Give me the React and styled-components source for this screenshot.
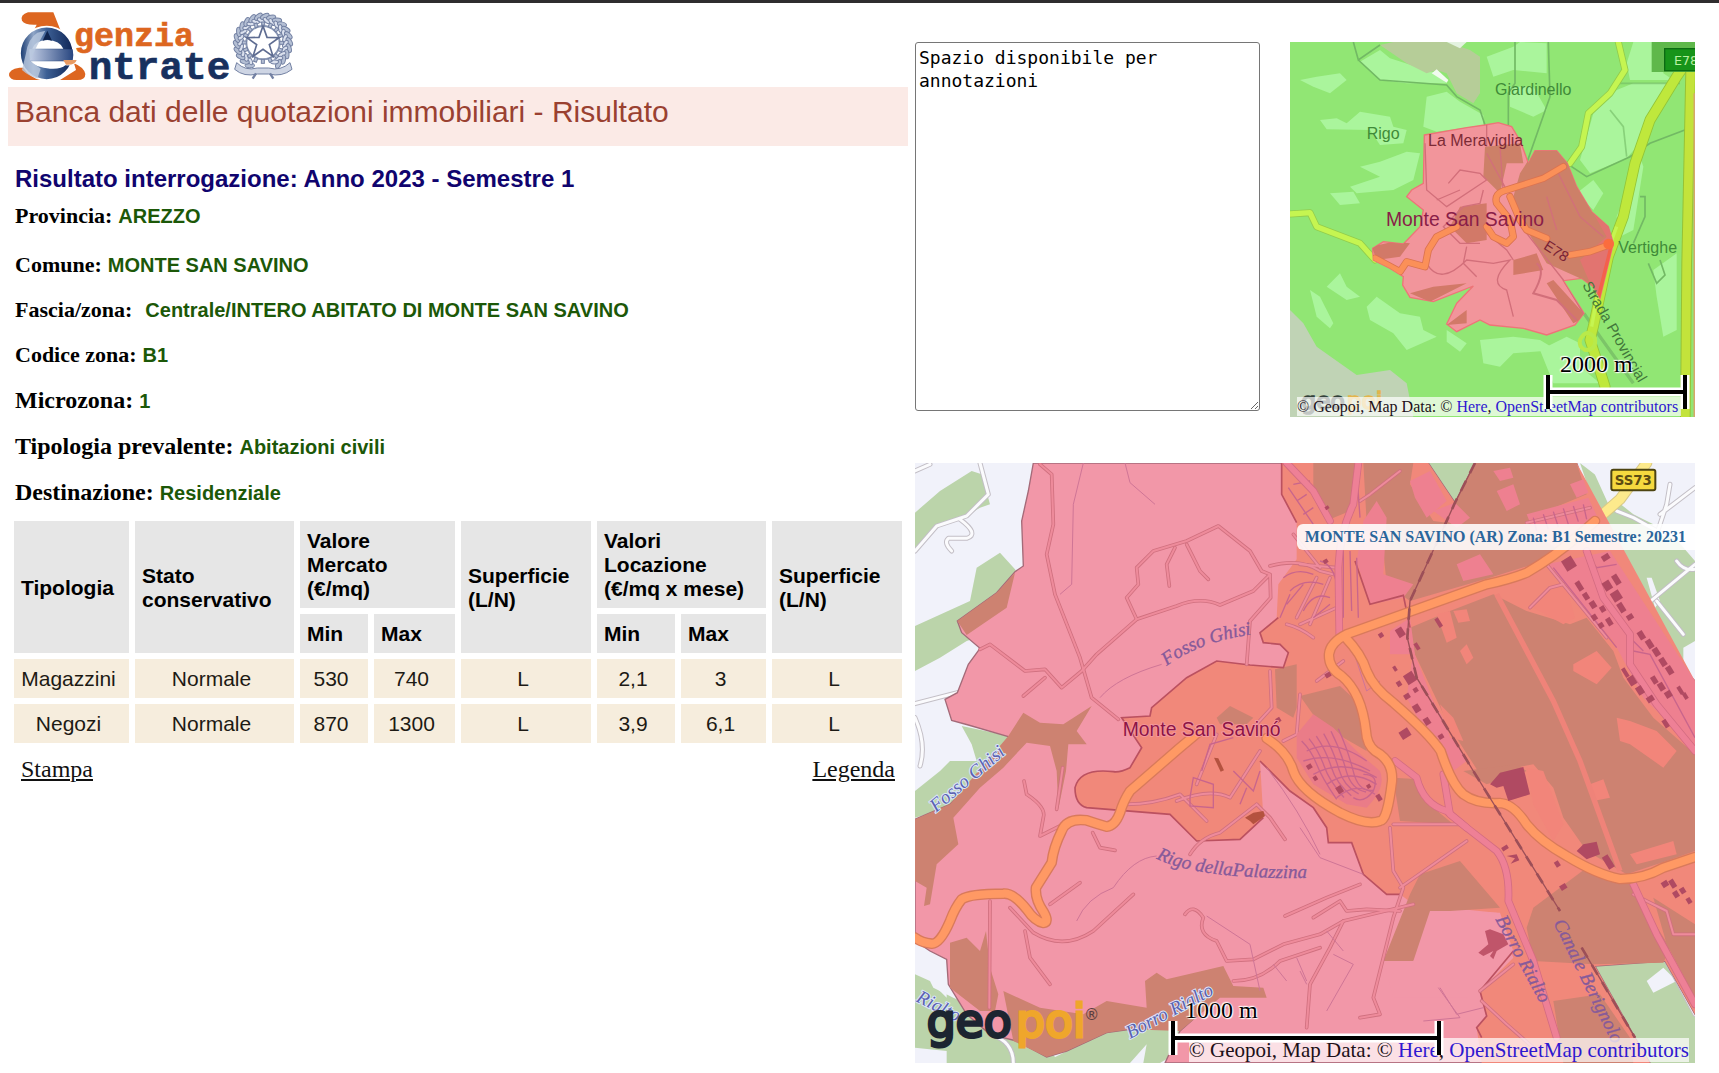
import React, { useState } from 'react';
import styled, { createGlobalStyle } from 'styled-components';

const GlobalStyle = createGlobalStyle`
    body {
        margin: 0;
        background: #fff;
        color: #000;
        font-family: "Liberation Serif", "Times New Roman", serif;
    }
    * {
        box-sizing: border-box;
    }
`

const Page = styled.div`
    display: grid;
    grid-template-columns: 15fr 13fr;
    gap: 7px;
    align-items: start;
    border-top: 3px solid #2f2d2e;
    padding: 7px 24px 8px 8px;
`

const Column = styled.main`
    min-width: 0;
`

const Side = styled.aside`
    min-width: 0;
    padding-top: 32px;
    display: grid;
    gap: 46px;
`

const SideTop = styled.div`
    display: grid;
    grid-template-columns: 345fr 405fr;
    gap: 30px;
    align-items: start;
`

const LogoSvg = styled.svg`
    display: block;
    width: 288px;
    height: 74px;
    margin-bottom: 3px;
`

const Banner = styled.h1`
    margin: 0;
    padding: 8px 7px 17px;
    background: #fbeae6;
    color: #9a4131;
    font: 400 30px/34px "Liberation Sans", Arial, sans-serif;
`

const Heading = styled.h2`
    margin: 19px 7px 0;
    color: #10046e;
    font: 700 24px/28px "Liberation Sans", Arial, sans-serif;
`

const Details = styled.dl`
    margin: 0 7px;
`

const Detail = styled.div`
    display: flex;
    align-items: baseline;
    gap: ${p => (p.$wide ? 13 : 6)}px;
    font-size: ${p => (p.$large ? 24 : 22)}px;
    line-height: ${p => (p.$large ? 46 : 45)}px;
    font-weight: 700;
    &:first-child {
        margin-bottom: 4px;
    }
`

const Term = styled.dt`
    color: #000;
`

const Value = styled.dd`
    margin: 0;
    color: #1c5808;
    font: 700 20px/24px "Liberation Sans", Arial, sans-serif;
`

const Table = styled.table`
    width: 100%;
    table-layout: fixed;
    border-collapse: separate;
    border-spacing: 6px;
    font: 400 21px/24px "Liberation Sans", Arial, sans-serif;
`

const Th = styled.th`
    padding: 8px 7px 7px;
    background: #e6e6e6;
    text-align: left;
    font-weight: 700;
`

const Td = styled.td`
    padding: 8px 6px 7px 0;
    background: #f6eddd;
    color: #1d1a14;
    text-align: center;
`

const Links = styled.nav`
    display: flex;
    justify-content: space-between;
    padding: 6px 13px;
    font-size: 24px;
    line-height: 28px;
`

const Link = styled.a`
    color: #111;
`

const Notes = styled.textarea`
    display: block;
    width: 100%;
    height: 369px;
    padding: 3px;
    border: 1px solid #767676;
    border-radius: 3px;
    background: #fff;
    color: #000;
    font: 400 18px/23px "DejaVu Sans Mono", monospace;
    resize: both;
`

const MapBox = styled.section`
    position: relative;
    overflow: hidden;
    aspect-ratio: ${p => p.$ratio};
`

const MapSvg = styled.svg`
    display: block;
    width: 100%;
    height: 100%;
`

const Caption = styled.div`
    position: absolute;
    top: 61px;
    right: 0;
    padding: 0 9px 0 8px;
    border-radius: 6px 0 0 6px;
    background: rgba(255, 255, 255, 0.88);
    color: #2a659b;
    font-size: 16px;
    font-weight: 700;
    line-height: 26px;
`

const Credits = styled.div`
    position: absolute;
    right: ${p => (p.$small ? 14 : 6)}px;
    bottom: 1px;
    left: ${p => (p.$small ? '7px' : 'auto')};
    overflow: hidden;
    white-space: nowrap;
    background: rgba(255, 255, 255, 0.7);
    color: #201018;
    font-size: ${p => (p.$small ? 16 : 21)}px;
    line-height: ${p => (p.$small ? 19 : 24)}px;
    a {
        color: #2f18d0;
        text-decoration: none;
    }
`

const Scale = styled.div`
    position: absolute;
    right: ${p => p.$right}px;
    bottom: 6px;
    width: ${p => p.$width}px;
    font-size: 24px;
    line-height: 18px;
    color: #000;
    text-shadow: 0 0 2px #fff, 0 0 2px #fff, 1px 1px 1px #fff, -1px -1px 1px #fff;
`

const ScaleLabel = styled.div`
    padding-left: 17px;
`

const ScaleSvg = styled.svg`
    display: block;
    width: 100%;
    height: 38px;
`

function ScaleBar({ label, width, right }) {
    const d = `M5 2V36M${width - 5} 2V36M5 19H${width - 5}`;
    return (
        <Scale $width={width} $right={right}>
            <ScaleSvgWithLabel label={label} d={d} />
        </Scale>
    )
}

function ScaleSvgWithLabel({ label, d }) {
    return (
        <>
            <ScaleLabel>{label}</ScaleLabel>
            <ScaleSvg>
                <path d={d} stroke="#fff" strokeWidth="9" fill="none" />
                <path d={d} stroke="#000" strokeWidth="4" fill="none" />
            </ScaleSvg>
        </>
    )
}

function MapCredits({ small }) {
    return (
        <Credits $small={small}>
            © Geopoi, Map Data: © <a href="#here">Here</a>, <a href="#osm">OpenStreetMap contributors</a>
        </Credits>
    )
}

const leaves = Array.from({ length: 22 }, (_, i) => -240 + i * 14);
const teeth = Array.from({ length: 16 }, (_, i) => i * 22.5);

function Logo() {
    return (
        <LogoSvg viewBox="24 30 864 222" role="img" aria-label="Agenzia Entrate">
            <defs>
                <linearGradient id="ring" x1="0" y1="0" x2="1" y2="0">
                    <stop offset="0" stopColor="#16386f" />
                    <stop offset=".25" stopColor="#8fa5c6" />
                    <stop offset=".5" stopColor="#3c5f94" />
                    <stop offset="1" stopColor="#0e2455" />
                </linearGradient>
                <linearGradient id="bar" x1="0" y1="0" x2="1" y2="0">
                    <stop offset="0" stopColor="#c4cfe6" />
                    <stop offset="1" stopColor="#27457f" />
                </linearGradient>
            </defs>
            <path d="M84 37H160L182 92Q140 74 104 86L110 74Q74 76 66 62Q60 44 84 37Z" fill="#dd6620" />
            <path d="M58 203Q26 208 27 226Q30 240 50 240H124L80 203ZM222 190Q252 202 256 222Q256 240 232 240H180L228 210Z" fill="#dd6620" />
            <circle cx="140" cy="160" r="80" fill="url(#ring)" stroke="#fff" strokeWidth="5" />
            <path d="M97 146Q104 122 142 120Q180 122 190 146Z" fill="#fff" />
            <path d="M88 148H218Q222 166 218 182H90Z" fill="url(#bar)" />
            <path d="M92 184H230Q226 198 196 196Q184 208 150 206Q108 204 92 184Z" fill="#fff" />
            <path d="M112 98Q84 116 78 160L66 210Q86 228 112 236L122 206L90 182L112 136L136 92Z" fill="#b9c8df" opacity=".8" />
            <path d="M142 92L156 122Q142 116 128 122Z" fill="#10254f" />
            <path d="M190 180H230Q226 196 198 194Z" fill="#e89a62" />
            <g fontFamily="Liberation Mono" fontWeight="700" strokeWidth="2">
                <text x="222" y="137" fontSize="100" fill="#dd6620" stroke="#dd6620">genzia</text>
                <text x="266" y="237" fontSize="118" fill="#17305e" stroke="#17305e">ntrate</text>
            </g>
            <g stroke="#7381a3" fill="#b4bfd4" strokeWidth="3">
                {leaves.map(a => (
                    <g key={a} transform={`rotate(${a} 789 128)`}>
                        <ellipse cx="868" cy="128" rx="7" ry="14" transform="rotate(-30 868 128)" />
                        <ellipse cx="856" cy="134" rx="6" ry="12" transform="rotate(35 856 134)" fill="#dbe1ee" />
                    </g>
                ))}
                <circle cx="789" cy="128" r="50" fill="none" stroke="#8c99b6" strokeWidth="6" />
                {teeth.map(a => (
                    <rect key={a} x="785" y="66" width="9" height="12" transform={`rotate(${a} 789 128)`} />
                ))}
                <path d="M789 78L801 112L837 113L808 134L819 169L789 148L759 169L770 134L741 113L777 112Z" fill="#fff" stroke="#5e6c91" strokeWidth="5" />
                <path d="M710 188Q736 214 772 204L806 204Q842 214 870 188L876 208Q846 232 806 222H772Q732 232 704 208Z" fill="#ced5e4" />
                <path d="M768 220L758 236M810 220L820 236" fill="none" strokeWidth="7" />
            </g>
        </LogoSvg>
    )
}

// Street geometry: each road is drawn twice, a wide casing and a narrower fill.
function Roads({ paths, casing, fill, width, edge = 8 }) {
    return (
        <g fill="none" strokeLinejoin="round" strokeLinecap="round">
            {paths.map(d => <path key={d} d={d} stroke={casing} strokeWidth={width + edge} />)}
            {paths.map(d => <path key={d} d={d} stroke={fill} strokeWidth={width} />)}
        </g>
    )
}

const mainRoads = [
    'M2085 210L2040 250Q1960 320 1880 365Q1830 385 1760 400L1340 550Q1290 575 1287 610Q1285 650 1325 675Q1385 725 1398 840Q1400 880 1425 900Q1480 930 1476 990Q1462 1110 1440 1110Q1400 1125 1320 1085Q1200 1020 1180 960Q1165 905 1100 862',
    'M900 840L840 890L690 1020Q670 1050 660 1085Q645 1125 620 1127Q590 1118 560 1108Q500 1100 485 1140Q460 1190 455 1235L408 1310Q404 1345 432 1385Q448 1414 430 1416Q405 1412 380 1375Q340 1325 310 1328Q210 1328 185 1345Q165 1370 150 1410Q120 1480 95 1478Q65 1475 45 1460',
    'M1335 558Q1385 610 1400 660Q1420 710 1480 755Q1590 850 1622 900Q1655 1000 1690 1030Q1730 1060 1800 1056Q1840 1058 1880 1120Q1920 1170 2000 1215Q2090 1270 2160 1284Q2230 1284 2290 1250L2385 1218',
]

const pinkRoads = [
    'M1160 36L1240 120L1290 210',
    'M1375 36L1360 160Q1320 240 1315 350L1318 550',
    'M1485 930L1550 980Q1570 1060 1640 1080L1700 1130L1790 1200Q1830 1250 1825 1350L1900 1530L1970 1760',
    'M1630 970L1650 1090L1700 1130',
    'M2060 300L2110 440L2190 550L2190 640L2270 760L2385 900',
    'M2200 1300L2270 1450L2385 1660',
]

const lanes = [
    'M420 40L455 70L460 220L440 310L465 430L540 620L575 740L655 805',
    'M1110 370L1085 360L1050 300L955 225L860 270L760 300L710 350L715 400L680 440L710 505L830 465Q900 435 960 462L1060 420L1110 370L1112 440L1050 510L1040 640',
    'M825 290L800 340L808 405',
    'M860 280L900 360L925 385',
    'M710 505L590 610L545 660L485 710L435 655L375 660L270 580L240 595',
    'M435 680L370 735',
    'M1110 345Q1200 320 1260 360L1320 375',
    'M1160 520Q1200 530 1240 560',
    'M372 990L380 1030Q440 1070 430 1100L420 1155L480 1125',
    'M488 950L470 1075',
    'M578 1145L600 1190L645 1198',
    'M270 1350L268 1670',
    'M330 1370L400 1445Q490 1500 580 1440L700 1330',
    'M375 1440L390 1520L450 1600',
    'M450 1360L540 1295',
    'M870 1210Q900 1160 960 1145L1070 1060',
    'M1070 1060L1110 1100L1155 1165',
    'M855 1390Q880 1355 910 1400Q890 1450 950 1470L980 1530L1060 1525L1150 1480L1260 1450L1330 1410L1540 1360',
    'M1155 1395L1280 1340L1380 1300',
    'M1240 1400L1320 1350L1340 1380L1400 1375L1500 1380',
    'M1000 1590Q1080 1590 1140 1530L1260 1490',
    'M1380 1700L1440 1690L1420 1640L1480 1400L1510 1310L1480 1260L1470 1130',
    'M1500 1310L1700 1170',
    'M1220 1730L1230 1600L1290 1490L1330 1410',
    'M1110 660L1115 770L1060 830',
    'M1250 690L1330 630',
    'M1200 730L1190 850L1150 870',
    'M830 1050Q930 1010 990 1040L1080 900',
    'M890 1000L950 850',
    'M680 1060Q760 1060 840 1030L920 1110',
    'M1480 1120H1680',
    'M1840 1540L1740 1620',
    'M1745 1650L1820 1720L1900 1790',
    'M1940 340L2120 560',
    'M1890 470L1950 410L1990 400',
    'M2200 1330L2300 1380L2320 1450L2385 1450',
    'M1880 215L2070 170',
    'M1380 150L1410 130L1500 60',
    'M1180 250L1260 350M1250 380L1190 500M1290 380L1230 520M1200 340L1310 350M1200 520L1310 470',
]

const streams = [
    'M550 36L520 160L515 400L480 430',
    'M675 36L690 95L765 160',
    'M600 740Q650 680 785 640',
    'M530 1410Q560 1340 640 1310Q700 1220 770 1215',
    'M1100 950Q1200 1080 1260 1210',
    'M1200 1130L1260 1220L1390 1270',
    'M920 1395L1050 1480L1080 1620',
    'M1120 1540L1160 1590M1190 1520L1220 1590M1280 1440L1330 1500',
    'M1615 1610L1680 1700L1570 1710M1620 1610L1670 1690L1750 1670',
    'M1200 1560L1220 1600M1300 1510L1360 1540L1280 1680',
    'M1360 600L1400 720L1440 690',
]

const browns = [
    '1240,36 1368,36 1350,180 1290,205 1240,110',
    '1390,36 1540,36 1530,100 1600,210 1640,215 1530,450 1460,400 1450,300 1400,215',
    '1725,36 2030,36 2060,130 1890,200 1890,240 1980,300 1900,340 1770,380 1530,450 1665,155',
    '1530,530 1650,480 1780,430 1880,480 2010,520 2060,500 2140,600 2170,680 2260,800 2385,910 2385,1200 2300,1230 2180,1270 2060,1200 1990,1100 1960,1010 1900,940 1740,970 1650,830 1540,600',
    '172,510 290,425 345,365 320,470 200,552',
    '325,855 370,785 420,815 490,820 575,765 530,840 560,880 505,880 498,960 475,1075 470,960 450,885 380,875 310,950 240,1010 160,1100 175,1180 110,1240 90,1360 72,1365 80,1310 45,1290 45,1105 150,1060',
    '150,1475 200,1460 240,1500 258,1440 270,1550 295,1630 285,1680 240,1680 150,1610',
    '310,1620 420,1670 550,1690 620,1650 740,1670 735,1590 770,1565 800,1585 970,1545 1000,1605 1090,1610 1100,1640 960,1640 840,1740 690,1735 620,1745 500,1800 440,1818 340,1770',
    '1125,655 1190,640 1190,770 1180,800 1130,770',
    '1200,735 1320,705 1380,760 1400,900 1260,820',
    '950,800 990,765 1060,800 1040,820 960,820',
    '1480,980 1560,985 1600,1070 1660,1120 1500,1110',
    '1530,1330 1560,1270 1680,1230 1800,1370 1650,1380 1600,1470 1540,1530 1450,1530 1490,1430',
    '1900,1370 2060,1250 2190,1300 2310,1490 2290,1535 2080,1540 1900,1530 1880,1430',
    '1960,1650 2100,1630 2190,1760 2200,1836 1990,1836',
    '2260,1340 2385,1420 2385,1640 2300,1480',
    '1690,960 1850,940 1880,960 1760,1000',
]

const pinkPatches = [
    '1530,90 1590,60 1640,150 1580,200 1545,140',
    '1390,210 1430,150 1460,200 1450,370 1540,400 1510,440 1410,460 1370,330',
    '1600,180 1665,155 1710,200 1670,230',
    '1780,60 1830,50 1840,80 1800,90',
    '1790,120 1840,100 1860,160 1820,180',
    '1670,340 1740,310 1780,370 1690,390',
    '2010,100 2050,85 2065,125 2030,140',
    '1880,190 2065,140 2100,215 1900,240',
    '1470,540 1530,500 1545,610 1470,610',
    '1940,340 2130,300 2385,690 2385,890 2230,740 2140,570 2050,470',
    '1540,600 1600,750 1700,930 1660,960 1580,850 1520,740',
]

const salmonPatches = [
    '1610,490 1650,480 1670,560 1640,575',
    '1680,600 1700,580 1720,620 1700,640',
    '1660,480 1700,475 1710,510 1675,515',
    '1900,470 1950,405 2000,410 2025,500 1990,520',
    '2020,640 2090,600 2135,650 2090,700 2020,660',
    '2150,800 2190,810 2270,840 2330,900 2290,950 2190,880 2160,870',
    '2070,1000 2110,985 2130,1040 2080,1050',
    '1620,760 1660,800 1690,870 1650,860',
    '1880,950 1930,960 1990,1120 1960,1170 1900,1060',
    '2190,1210 2320,1170 2330,1210 2210,1240',
]

const towerBlocks = [
    [1990, 320, 34, 36], [2030, 390, 16, 30], [2050, 425, 16, 22], [2070, 450, 18, 22], [2100, 465, 16, 18],
    [2075, 490, 16, 18], [2120, 500, 16, 24], [2095, 515, 16, 16], [2110, 390, 24, 28], [2135, 420, 28, 30],
    [2155, 455, 18, 30], [2180, 490, 20, 16], [2105, 310, 24, 18], [2140, 370, 18, 32], [2215, 540, 18, 26],
    [2240, 565, 18, 28], [2260, 590, 18, 26], [2280, 620, 18, 26], [2300, 645, 18, 26], [2255, 675, 16, 24],
    [2275, 695, 18, 24], [2295, 720, 20, 20], [2170, 650, 12, 30], [2185, 675, 22, 28], [2210, 705, 20, 26],
    [2240, 735, 22, 18], [2335, 705, 12, 26], [2350, 725, 12, 20], [2290, 805, 14, 26], [1490, 530, 22, 28],
    [1436, 546, 14, 14], [1480, 645, 10, 16], [1515, 665, 30, 32], [1490, 690, 14, 16], [1540, 710, 14, 14],
    [1512, 728, 18, 16], [1540, 760, 20, 24], [1572, 800, 18, 22], [1500, 835, 30, 26], [1615, 850, 16, 14],
    [1545, 575, 12, 22], [1270, 325, 14, 12], [1275, 665, 18, 14], [1128, 800, 14, 14], [1610, 500, 12, 30],
    [2115, 1212, 20, 42], [1965, 1230, 14, 18], [1980, 1300, 20, 16], [1805, 1185, 20, 12], [1310, 1005, 18, 22],
    [1220, 940, 16, 14], [1430, 1030, 14, 20], [1400, 1000, 12, 12], [1240, 975, 12, 14], [1275, 165, 12, 10],
    [2285, 1290, 20, 18], [2310, 1285, 16, 26], [2340, 1310, 16, 18], [2320, 1320, 16, 20], [2360, 1340, 14, 18],
]

const ZONE = 'M400 36L385 120L365 210L370 345L345 362L290 425L172 510L185 545L240 592L205 640L172 725L135 745L155 808L205 822L330 858L240 970L150 1060L45 1105V1470L90 1500L140 1525L145 1600L200 1690L270 1750L350 1770L440 1818L500 1800L620 1745L690 1735L780 1680L970 1605L975 1620L840 1740L795 1836H2250L2205 1760L2085 1545L2295 1530L2385 1690V690L2320 620L2240 530L2200 470L2150 330L2070 150L2030 36H1725L1665 155L1585 36Z'

const TOWN = 'M1145 36V130L1190 215V325L1135 400L1130 500L1080 545L1090 575L1140 580L1165 605L1150 650L1050 642L950 630L860 680L755 770L750 795L665 800L725 890L690 950Q660 965 640 962Q540 950 525 1010Q525 1060 560 1070L810 1090L890 1170L1020 1165L1090 1100L1080 930L1170 1020L1240 1070L1280 1130L1285 1175L1355 1175L1390 1270L1460 1330H1500L1540 1360L1790 1385L1840 1520L1740 1620L1760 1695L1730 1730L1745 1836H2250L2205 1760L2085 1545L2295 1530L2385 1690V690L2030 36H1725L1665 155L1585 36Z'

const RIVER = { fontFamily: 'Liberation Serif', fontStyle: 'italic', fontSize: 57, fill: '#865a9a' }

function ZoneMap() {
    return (
        <MapBox $ratio="780 / 600">
            <MapSvg viewBox="45 36 2340 1800" preserveAspectRatio="xMidYMid slice">
                <rect x="45" y="36" width="2340" height="1800" fill="#f1f2fa" />
                <g fill="#bbd4aa">
                    <path d="M45 185L120 120L215 60L245 70L270 160L240 170L200 195L100 235L45 300Z" />
                    <path d="M45 525L210 450L230 350L300 305L345 355L420 500L200 570L120 620L45 660Z" />
                    <path d="M185 825L400 870L250 1040L45 1100V1020L120 960L150 930H230L215 880Z" />
                    <path d="M45 1570L90 1590L100 1610L160 1640L400 1740L480 1836H140V1800L45 1790Z" />
                    <path d="M430 1836L620 1740L760 1660L980 1600V1700L840 1800L780 1836H730L740 1780L690 1836Z" />
                    <path d="M1560 30H1740L1665 160Z" />
                    <path d="M2040 36L2110 90L2150 160L2250 180L2290 220L2385 330V690L2240 540L2150 330L2100 215Z" />
                    <path d="M2070 1540L2300 1525L2385 1690V1836H2240Z" />
                </g>
                <path d="M2080 60L2130 170L2260 230L2385 300V36H2040Z" fill="#f1f2fa" />
                <path d="M2100 190L2150 150L2200 190L2260 220L2230 250H2120Z" fill="#bbd4aa" />
                <g fill="#f1f2fa">
                    <path d="M2240 380L2255 380L2280 450L2265 470Z" />
                    <path d="M2350 590L2385 570V700L2350 680Z" />
                    <path d="M2240 1590L2290 1550L2330 1590L2260 1625Z" />
                    <path d="M100 1600L140 1560V1640L110 1610Z" />
                </g>
                <Roads
                    paths={[
                        'M45 300L110 225L200 195L265 130L240 36', 'M180 205Q240 250 200 262H145Q130 275 155 300',
                        'M45 60L90 40', 'M45 758L172 725', 'M45 800Q80 880 60 945', 'M2150 180L2200 200L2290 250',
                        'M2270 250L2300 160L2310 100M2280 190L2385 110', 'M2210 485L2385 340', 'M2270 450L2350 550',
                        'M270 1750Q340 1770 340 1836', 'M2300 1530L2385 1690', 'M2330 330Q2350 360 2385 355',
                    ]}
                    casing="#c3bfc6" fill="#fbfbfd" width={9} edge={6}
                />
                <Roads paths={['M2240 36L2160 145L2085 210']} casing="#d9c987" fill="#fdea8c" width={28} edge={6} />

                <path d={ZONE} fill="#f297a8" stroke="#a46a78" strokeWidth="4" />
                <path d={TOWN} fill="#f1887a" />
                <g fill="#cd8271">
                    {browns.map(p => <polygon key={p} points={p} />)}
                </g>
                <g fill="#ee8090">
                    {pinkPatches.map(p => <polygon key={p} points={p} />)}
                </g>
                <g fill="#f2857a">
                    {salmonPatches.map(p => <polygon key={p} points={p} />)}
                </g>
                <path d="M1590 1380L1650 1380L1800 1385L1840 1500L1700 1640L1480 1640L1450 1530L1540 1530Z" fill="#f297a8" />
                <path d="M1145 36V130L1190 215M1135 500L1080 545L1090 575L1140 580L1165 605L1150 650L1050 642L950 630L860 680L755 770L750 795L665 800L725 890L690 950Q660 965 640 962Q540 950 525 1010Q525 1060 560 1070L810 1090L890 1170L1020 1165L1090 1100M1080 930L1170 1020L1240 1070L1280 1130L1285 1175L1355 1175L1390 1270L1460 1330H1500M1840 1500L1740 1620L1760 1695L1730 1730L1745 1760M1365 330L1410 460L1510 433L1530 530" fill="none" stroke="#bb5160" strokeWidth="5" />

                <Roads paths={lanes} casing="#d0707f" fill="#ee8b9b" width={6} edge={5} />
                <g fill="none" stroke="#cf7596" strokeWidth="3">
                    {streams.map(d => <path key={d} d={d} />)}
                </g>
                <path d="M1790 430L1960 750L2040 930L2160 1260" fill="none" stroke="#ef8379" strokeWidth="16" />

                {/* dense terraces south of the centre */}
                <path d="M1190 850L1240 790L1300 830L1370 900L1440 960Q1460 1010 1400 1070L1340 1060L1240 1000L1190 920Z" fill="#ea7c88" />
                <g fill="none" stroke="#c9658c" strokeWidth="4">
                    {[0, 22, 44, 66, 88, 110].map(o => (
                        <path key={o} d={`M${1205 + o} ${870 - o / 3}Q${1235 + o} ${900} ${1250 + o} ${940 + o / 5}T${1310 + o} ${1045 - o / 4}`} />
                    ))}
                    <path d="M1210 930Q1300 900 1410 960M1220 900Q1300 860 1400 930M1280 1000Q1350 950 1430 1000M1310 1040Q1370 990 1425 1030M1240 970Q1330 920 1430 980" />
                    <path d="M1390 970Q1440 970 1420 1020Q1390 1060 1360 1040" />
                    <path d="M905 960L930 880L1000 860M870 1040L880 980L940 1000V1070L870 1065ZM1000 960L1060 1020L1080 960M1020 1060L1040 1010" />
                    <path d="M1370 60L1380 200M1165 110L1240 220M1180 100L1230 90M1190 150L1220 130M1210 190L1240 170M1330 300V500M1350 300L1355 480M1370 320L1375 500" />
                    <path d="M1150 380Q1190 350 1240 370M1170 420Q1210 380 1270 400M1160 460L1210 400M1210 480Q1240 420 1290 440M1140 500L1170 430M1240 500L1290 460M1260 330Q1300 340 1310 400" />
                    <path d="M1900 200L1910 240M1930 190L1945 235M1960 182L1975 228M1990 172L2005 220M2020 165L2035 212M2050 160L2060 205" />
                    <path d="M1960 350L2150 590M2050 300L2090 350L2150 340M2200 600L2250 610L2385 860M2190 560L2230 600" />
                </g>

                <Roads paths={pinkRoads} casing="#d46c82" fill="#ee8096" width={18} edge={5} />
                <Roads paths={mainRoads} casing="#d97a5b" fill="#ff9964" width={24} edge={8} />

                <g fill="#b04a62">
                    {towerBlocks.map(([x, y, w, h]) => (
                        <rect key={`${x}-${y}`} x={x} y={y} width={w} height={h} transform={`rotate(-32 ${x + w / 2} ${y + h / 2})`} />
                    ))}
                    <path d="M1770 1000L1800 965L1870 948L1890 1030L1825 1050L1810 1005L1790 1010Z" />
                    <path d="M2030 1200L2050 1180L2090 1172L2100 1210L2060 1225Z" />
                    <path d="M1755 1440L1770 1435L1810 1450L1825 1480L1790 1500L1780 1525L1770 1515L1780 1500L1750 1515L1735 1505L1765 1480Z" fill="#c0556a" />
                    <path d="M1820 1215L1850 1210L1858 1228L1832 1238L1845 1222Z" />
                    <path d="M1035 1100L1060 1085L1090 1080L1095 1095L1060 1120L1050 1110Z" fill="#b4523f" />
                    <path d="M942 920L955 922L972 958L962 962Z" fill="#b4523f" />
                </g>

                <path d="M1725 36L1665 155L1530 450L1522 560L1550 680L1720 960L1980 1380M2045 1490L2205 1760" fill="none" stroke="#9c4f58" strokeWidth="4" />
                <path d="M1725 36L1665 155L1530 450L1522 560L1550 680L1720 960L1980 1380M2045 1490L2205 1760" fill="none" stroke="#9c4f58" strokeWidth="8" strokeDasharray="34 26" />

                <g {...RIVER}>
                    <g stroke="#865a9a" strokeWidth="1">
                        <path id="ghisi" d="M800 645Q900 570 1070 548" fill="none" stroke="none" />
                        <text><textPath href="#ghisi">Fosso Ghisi</textPath></text>
                        <path id="rigo" d="M768 1222Q900 1290 1280 1280" fill="none" stroke="none" />
                        <text><textPath href="#rigo">Rigo dellaPalazzina</textPath></text>
                        <text transform="translate(1786 1405) rotate(62)">Borro Rialto</text>
                        <text transform="translate(1960 1415) rotate(64)">Canale Berignolo</text>
                    </g>
                    <g fill="#5a62b0" stroke="#dce6fb" strokeWidth="6" paintOrder="stroke">
                        <text transform="translate(108 1085) rotate(-40)">Fosso Ghisi</text>
                        <text transform="translate(46 1650) rotate(27)">Rialto</text>
                        <text transform="translate(690 1764) rotate(-28)">Borro Rialto</text>
                    </g>
                </g>
                <text x="668" y="855" fontFamily="Liberation Sans" fontSize="58" fill="#8c1446" stroke="#f49aa4" strokeWidth="5" paintOrder="stroke">Monte San Savinó</text>

                <rect x="2134" y="56" width="132" height="62" rx="6" fill="#f5d93f" stroke="#4d4411" strokeWidth="6" />
                <text x="2200" y="102" textAnchor="middle" fontFamily="DejaVu Sans" fontWeight="700" fontSize="40" fill="#5b4c12">SS73</text>

                <g fontFamily="DejaVu Sans" fontSize="137" strokeWidth="9">
                    <text x="80" y="1758" fill="#1c2531" stroke="#1c2531">geo</text>
                    <text x="348" y="1758" fill="#efa62b" stroke="#efa62b">poi</text>
                    <text x="552" y="1708" fontSize="46" fill="#5a3d40" stroke="none">®</text>
                </g>
            </MapSvg>
            <Caption>MONTE SAN SAVINO (AR) Zona: B1 Semestre: 20231</Caption>
            <MapCredits />
            <ScaleBar label="1000 m" width={276} right={251} />
        </MapBox>
    )
}

const clearings = [
    'M240 95L300 60L330 85L470 130L500 160H380L300 150Z',
    'M440 200L500 185L540 215L610 255V285L470 305L430 290Z',
    'M120 270L170 265L200 280L240 245L330 260L340 290L380 300L370 340L300 345L270 300L140 298Z',
    'M240 410L300 395L380 365L420 370L400 450L340 480L230 490L210 470L300 440Z',
    'M900 390L940 250L1010 180L1060 160H1180L1120 260L1070 350L1040 385L930 430Z',
    'M1060 36H1150V130L1180 150L1050 150L1040 100Z',
    'M60 150L110 140L180 130L200 150L150 190L100 170Z',
    'M90 780L120 800L160 880L150 895L110 860Z',
    'M140 770L180 730L200 770L240 800L200 810Z',
    'M260 830L290 800L360 850L420 860L430 900L470 920L380 960L340 910L270 870Z',
    'M600 930L700 920L780 930L830 960L700 970L660 1010L610 1000Z',
    'M780 960L860 920L900 940L900 1010L960 1060L820 1060Z',
    'M1080 380L1090 410L1060 600L1020 620L1010 560L1060 430Z',
    'M890 490L940 450L970 490L940 540Z',
    'M1120 720L1190 670V900L1150 920L1130 800Z',
    'M620 80L700 50L720 36L800 40V130L700 120L640 140Z',
    'M500 900L560 940L540 965L500 935Z',
    'M150 490L220 485L240 520L180 525Z',
    'M690 170L760 170L800 240L760 260L690 230Z',
]

const MINI_ZONE = 'M433 315L560 293L615 285L655 278L695 290L722 335L745 400L765 362H830L862 400L890 470L935 545L985 590L1000 640L960 805L940 770L905 745L850 752L912 850L885 885L800 915L730 895L630 885L600 870L530 905L500 882L530 820L580 768L460 815L390 802L368 765L370 740L330 715L280 690L278 655L310 635L370 642L420 590L430 540L380 500L395 480L430 460Z'

function OverviewMap() {
    return (
        <MapBox $ratio="405 / 375">
            <MapSvg viewBox="30 36 1215 1125" preserveAspectRatio="xMidYMid slice">
                <defs>
                    <clipPath id="mini"><path d={MINI_ZONE} /></clipPath>
                </defs>
                <rect x="30" y="36" width="1215" height="1125" fill="#91e674" />
                <g fill="#aaf59c">
                    {clearings.map(d => <path key={d} d={d} />)}
                </g>
                <path d="M300 45L340 36H500L570 60L600 80V190L580 220L530 190L500 130L470 120L440 130L380 100Z" fill="#b6cd98" />
                <path d="M455 130L470 118L505 150L500 158Z" fill="#f2fbf0" />
                <path d="M30 840L70 880L110 950L180 1000L230 1035L330 1020L380 1060L400 1161H30Z" fill="#c0d3b5" />
                <path d="M500 36H560L540 55Z" fill="#e4f3e0" />

                <g fill="none" stroke="#72b964" strokeWidth="5">
                    <path d="M220 36L235 90L300 45M235 90L300 150L500 165L530 200L600 240L615 285" />
                    <path d="M705 36V160L685 190V290" />
                    <path d="M805 36L810 200L740 400" />
                    <path d="M860 400L920 440L1050 380L1110 340L1240 290" />
                    <path d="M1080 500H1095V560L1060 640M1105 700L1130 760L1155 735L1140 690" />
                    <path d="M990 240L1030 290L1040 380M1010 160H1200" opacity=".6" />
                </g>
                <path d="M912 850L960 920L1060 1060" stroke="#7cc568" strokeWidth="10" fill="none" />

                <Roads paths={['M30 552L90 548L110 590L240 640L285 690', 'M1015 36L1035 120L990 190L925 250L905 350L870 400']} casing="#92cc4c" fill="#c5f551" width={16} edge={5} />
                <Roads paths={['M1245 60L1190 140L1110 270L1065 400L1030 560L985 680L940 890L930 930L950 990L975 1070']} casing="#93c437" fill="#bfe83c" width={28} edge={5} />
                <path d="M935 890L970 700L1010 590" stroke="#c5f551" strokeWidth="10" fill="none" />
                <path d="M900 930Q920 890 945 925Q950 960 915 960Q895 950 900 930Z" fill="none" stroke="#b9ea4a" strokeWidth="12" />
                <path d="M1232 120L1220 700L1216 1161" stroke="#96c236" strokeWidth="32" fill="none" />
                <path d="M1232 120L1220 700L1216 1161" stroke="#c3e33b" strokeWidth="26" fill="none" />
                <path d="M1243 190V1161" stroke="#d5a86a" strokeWidth="5" />

                <path d={MINI_ZONE} fill="#f2959b" stroke="#ee7478" strokeWidth="4" />
                <g clipPath="url(#mini)">
                    <path d="M615 350L720 340L730 400L680 400L660 490L610 440ZM720 430L765 360H870L1000 600L960 800L900 745L800 700L740 600L700 500Z" fill="#cd8068" />
                    <path d="M900 480L1000 600L990 680L960 800L930 760L900 690L980 620Z" fill="#e27470" />
                    <path d="M540 530L620 520L620 630L560 640L510 590ZM700 690L770 670L790 720L700 735ZM275 650L340 635L390 640L360 680L290 690ZM820 750L920 860L880 880L800 760ZM390 790L460 770L560 760L450 815ZM500 885L560 840L560 880Z" fill="#d27968" />
                    <g fill="none" stroke="#d26f7a" strokeWidth="4">
                        <path d="M435 340L440 480L500 530L620 450L600 430L540 420L505 460M470 510L540 480" />
                        <path d="M660 350L670 490M620 370L680 480M610 480L600 520L550 530L490 590L540 640L600 640M620 610L680 660L700 690" />
                        <path d="M440 700Q480 770 560 690L640 700L690 690Q620 760 680 780L700 860M560 650L550 700L590 740" />
                        <path d="M770 700Q800 720 760 790L830 810L890 870" strokeWidth="6" />
                        <path d="M830 420L900 560L970 620M740 610L850 750L910 850M800 500L830 600" />
                        <path d="M620 280V350" />
                    </g>
                    <Roads
                        paths={[
                            'M850 410L790 445L680 480Q640 490 650 520L690 570L700 620L680 640L640 620L620 590',
                            'M530 590L470 620L445 660L435 710L380 695L360 725L285 685',
                            'M690 500L720 570L740 600L800 625', 'M870 675L930 665L1000 640',
                        ]}
                        casing="#db7350" fill="#fb9058" width={17} edge={5}
                    />
                    <path d="M1000 630L955 810" stroke="#f4604c" strokeWidth="14" />
                </g>
                <circle cx="986" cy="642" r="16" fill="#fb6c3e" />

                <g fontFamily="Liberation Sans" fill="#3f8a38">
                    <text x="645" y="195" fontSize="48">Giardinello</text>
                    <text x="260" y="328" fontSize="48">Rigo</text>
                    <text x="1015" y="668" fontSize="48">Vertighe</text>
                    <text x="444" y="347" fontSize="48" fill="#7c2b36">La Meraviglia</text>
                    <text x="318" y="588" fontSize="58" fill="#891d48">Monte San Savino</text>
                    <text transform="translate(788 655) rotate(33)" fontSize="44" fill="#791f35">E78</text>
                    <text transform="translate(906 765) rotate(60)" fontSize="45" fill="#41763a">Strada Provincial</text>
                </g>
                <rect x="1115" y="36" width="130" height="90" fill="#5fb84b" />
                <rect x="1154" y="56" width="110" height="66" fill="#179419" stroke="#0b6b12" strokeWidth="4" />
                <text x="1182" y="104" fontFamily="DejaVu Sans" fontSize="38" fill="#b9f0a2">E78</text>
                <g fontFamily="DejaVu Sans" fontSize="70" strokeWidth="5">
                    <text x="64" y="1136" fill="#33423a" stroke="#33423a">geo</text>
                    <text x="200" y="1136" fill="#e2b54b" stroke="#e2b54b">poi</text>
                </g>
            </MapSvg>
            <MapCredits small />
            <ScaleBar label="2000 m" width={147} right={5} />
        </MapBox>
    )
}

const details = [
    { term: 'Provincia:', value: 'AREZZO' },
    { term: 'Comune:', value: 'MONTE SAN SAVINO' },
    { term: 'Fascia/zona:', value: 'Centrale/INTERO ABITATO DI MONTE SAN SAVINO', wide: true },
    { term: 'Codice zona:', value: 'B1' },
    { term: 'Microzona:', value: '1', large: true },
    { term: 'Tipologia prevalente:', value: 'Abitazioni civili', large: true },
    { term: 'Destinazione:', value: 'Residenziale', large: true },
]

const columns = [115, 159, 68, 81, 130, 78, 85, 130]

const rows = [
    ['Magazzini', 'Normale', '530', '740', 'L', '2,1', '3', 'L'],
    ['Negozi', 'Normale', '870', '1300', 'L', '3,9', '6,1', 'L'],
]

function Quotations() {
    return (
        <Table>
            <colgroup>
                {columns.map((w, i) => <col key={i} width={w} />)}
            </colgroup>
            <thead>
                <tr>
                    <Th rowSpan={2}>Tipologia</Th>
                    <Th rowSpan={2}>Stato conservativo</Th>
                    <Th colSpan={2}>Valore<br />Mercato<br />(€/mq)</Th>
                    <Th rowSpan={2}>Superficie (L/N)</Th>
                    <Th colSpan={2}>Valori<br />Locazione<br />(€/mq x mese)</Th>
                    <Th rowSpan={2}>Superficie (L/N)</Th>
                </tr>
                <tr>
                    <Th>Min</Th>
                    <Th>Max</Th>
                    <Th>Min</Th>
                    <Th>Max</Th>
                </tr>
            </thead>
            <tbody>
                {rows.map(row => (
                    <tr key={row[0]}>
                        {row.map((cell, i) => <Td key={i}>{cell}</Td>)}
                    </tr>
                ))}
            </tbody>
        </Table>
    )
}

function App() {
    const [notes, setNotes] = useState('Spazio disponibile per annotazioni');

    return (
        <>
            <GlobalStyle />
            <Page>
                <Column>
                    <Logo />
                    <Banner>Banca dati delle quotazioni immobiliari - Risultato</Banner>
                    <Heading>Risultato interrogazione: Anno 2023 - Semestre 1</Heading>
                    <Details>
                        {details.map(item => (
                            <Detail key={item.term} $large={item.large} $wide={item.wide}>
                                <Term>{item.term}</Term>
                                <Value>{item.value}</Value>
                            </Detail>
                        ))}
                    </Details>
                    <Quotations />
                    <Links>
                        <Link href="#stampa">Stampa</Link>
                        <Link href="#legenda">Legenda</Link>
                    </Links>
                </Column>
                <Side>
                    <SideTop>
                        <Notes aria-label="Annotazioni" value={notes} onChange={e => setNotes(e.target.value)} />
                        <OverviewMap />
                    </SideTop>
                    <ZoneMap />
                </Side>
            </Page>
        </>
    )
}

export default App
